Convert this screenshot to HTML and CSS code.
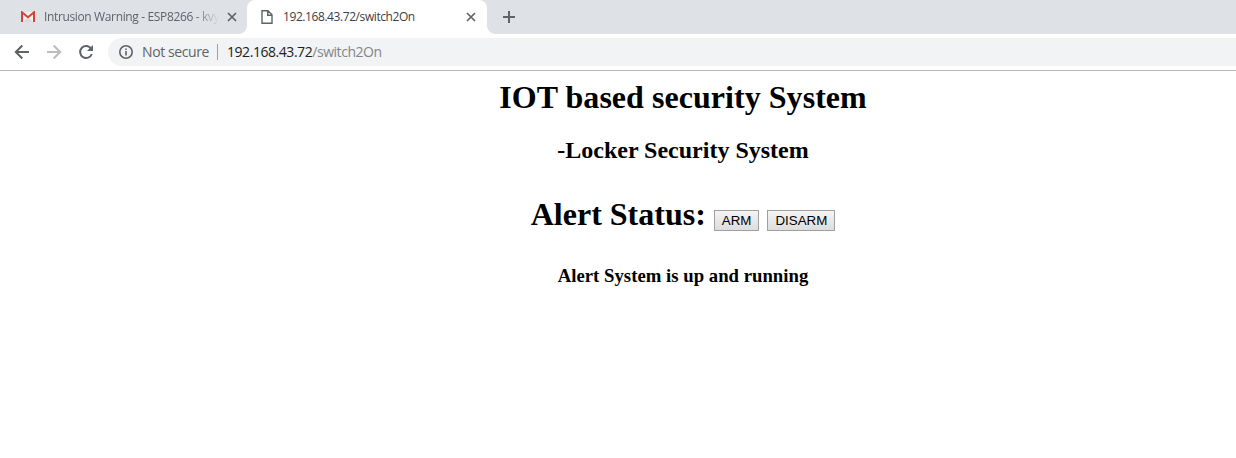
FILE: index.html
```html
<!DOCTYPE html>
<html lang="en">
<head>
<meta charset="utf-8">
<title>192.168.43.72/switch2On</title>
<link rel="stylesheet" href="styles.css">
</head>
<body>
<div class="tabs">
  <div class="tab">
    <svg class="mail" width="14" height="12" viewBox="0 0 14 12"><path d="M1 1h12v10H1z" fill="#f1f1f1"/><path d="M2 11l5-5 5 5z" fill="#d9dadc"/><path d="M1 11V1.3l6 5 6-5V11" fill="none" stroke="#d54336" stroke-width="2"/></svg>
    <span class="tab-title fade">Intrusion Warning - ESP8266 - kvy</span>
    <svg class="close" width="10" height="10" viewBox="0 0 10 10"><path d="M1 1l8 8M9 1L1 9"/></svg>
  </div>
  <div class="tab active">
    <svg class="page-icon" width="12" height="14" viewBox="0 0 12 14"><path d="M1 .7h6l4 4v8.600H1zM6.700 1v4.200H11"/></svg>
    <span class="tab-title">192.168.43.72/switch2On</span>
    <svg class="close" width="10" height="10" viewBox="0 0 10 10"><path d="M1 1l8 8M9 1L1 9"/></svg>
  </div>
  <svg class="plus" width="12" height="12" viewBox="0 0 12 12"><path d="M6 0v12M0 6h12"/></svg>
</div>
<div class="toolbar">
  <svg class="nav" width="16" height="16" viewBox="0 0 16 16"><path d="M15 8H2M8.300 1.500L1.800 8l6.500 6.500"/></svg>
  <svg class="nav off" width="16" height="16" viewBox="0 0 16 16"><path d="M1 8h13M7.700 1.500L14.200 8l-6.500 6.500"/></svg>
  <svg class="nav" width="16" height="16" viewBox="0 0 16 16"><path d="M13.200 4.800A6 6 0 1 0 13.800 10"/><path class="solid" d="M15 1v6H9z"/></svg>
  <div class="address">
    <svg class="info" width="14" height="14" viewBox="0 0 14 14"><circle cx="7" cy="7" r="6.200"/><path d="M7 6v4.500M7 3.500v1.500"/></svg>
    <span class="secure">Not secure</span>
    <span class="divider"></span>
    <span class="url">192.168.43.72<span class="path">/switch2On</span></span>
  </div>
</div>
<main class="content">
  <h1>IOT based security System</h1>
  <h2>-Locker Security System</h2>
  <h1 class="status">Alert Status: <button>ARM</button> <button>DISARM</button></h1>
  <h3>Alert System is up and running</h3>
</main>
</body>
</html>
```
FILE: styles.css
```css
* { box-sizing: border-box; }
body { margin: 0; width: 1236px; height: 458px; overflow: hidden; background: #fff; }
svg { display: block; flex: none; fill: none; }
.tabs { display: flex; height: 34px; background: #dee1e6; font: 12px/34px "Open Sans", sans-serif; color: #5f6368; }
.tab { display: flex; align-items: center; width: 247px; height: 34px; padding-left: 21px; }
.tab.active {
  position: relative; width: 240px; padding-left: 14px; background: #fff;
  border-radius: 8px 8px 0 0; color: #3c4043;
}
.tab.active::before, .tab.active::after { content: ""; position: absolute; bottom: 0; width: 8px; height: 8px; }
.tab.active::before { left: -8px; background: radial-gradient(circle at 0 0, transparent 7.500px, #fff 8px); }
.tab.active::after { right: -8px; background: radial-gradient(circle at 100% 0, transparent 7.500px, #fff 8px); }
.tab-title { width: 175px; margin-left: 9px; white-space: nowrap; overflow: hidden; letter-spacing: -0.36px; }
.active .tab-title { width: 183px; margin-left: 10px; letter-spacing: -0.42px; }
.fade { -webkit-mask-image: linear-gradient(90deg, #000 150px, transparent 175px); mask-image: linear-gradient(90deg, #000 150px, transparent 175px); }
.close { margin-left: 8px; stroke: #5f6368; stroke-width: 1.700; }
.active .close { margin-left: 0; }
.page-icon { stroke: #5f6368; stroke-width: 1.400; }
.plus { margin: 11px 0 0 16px; stroke: #5f6368; stroke-width: 2; }
.toolbar { display: flex; align-items: center; gap: 16px; height: 37px; padding-left: 14px; border-bottom: 1px solid #b6b6b6; }
.nav { stroke: #5f6368; stroke-width: 2; }
.nav.off { stroke: #babcbe; }
.nav .solid { fill: #5f6368; stroke: none; }
.address {
  display: flex; align-items: center; flex: 1; height: 28px; margin-left: -2px; padding-left: 11px;
  border-radius: 14px 0 0 14px; background: #f1f3f4; font: 14px/28px "Open Sans", sans-serif; color: #202124;
}
.info { stroke: #5f6368; stroke-width: 1.600; }
.secure { width: 68px; margin-left: 9px; letter-spacing: -0.4px; white-space: nowrap; color: #5f6368; }
.divider { width: 1px; height: 16px; margin: 0 9px 0 7px; background: #9aa0a6; }
.url { letter-spacing: -0.45px; white-space: nowrap; }
.path { color: #80868b; }
.content { padding: 8px 0 0 130px; text-align: center; font-family: "Liberation Serif", serif; color: #000; }
h1 { margin: 0; font-size: 32px; line-height: 37px; letter-spacing: 0.04px; }
h2 { margin: 21px 0 0; font-size: 24px; line-height: 27px; }
.status { margin-top: 32px; letter-spacing: 0; }
h3 { margin: 32px 0 0; font-size: 18.720px; line-height: 21px; letter-spacing: 0.02px; }
button {
  height: 21px; padding: 1px 7px; border: 1px solid #a0a0a0; border-radius: 0;
  background: linear-gradient(#f4f4f4, #dddddd); font: 13.333px/17px "Liberation Sans", sans-serif; color: #000;
}
```
